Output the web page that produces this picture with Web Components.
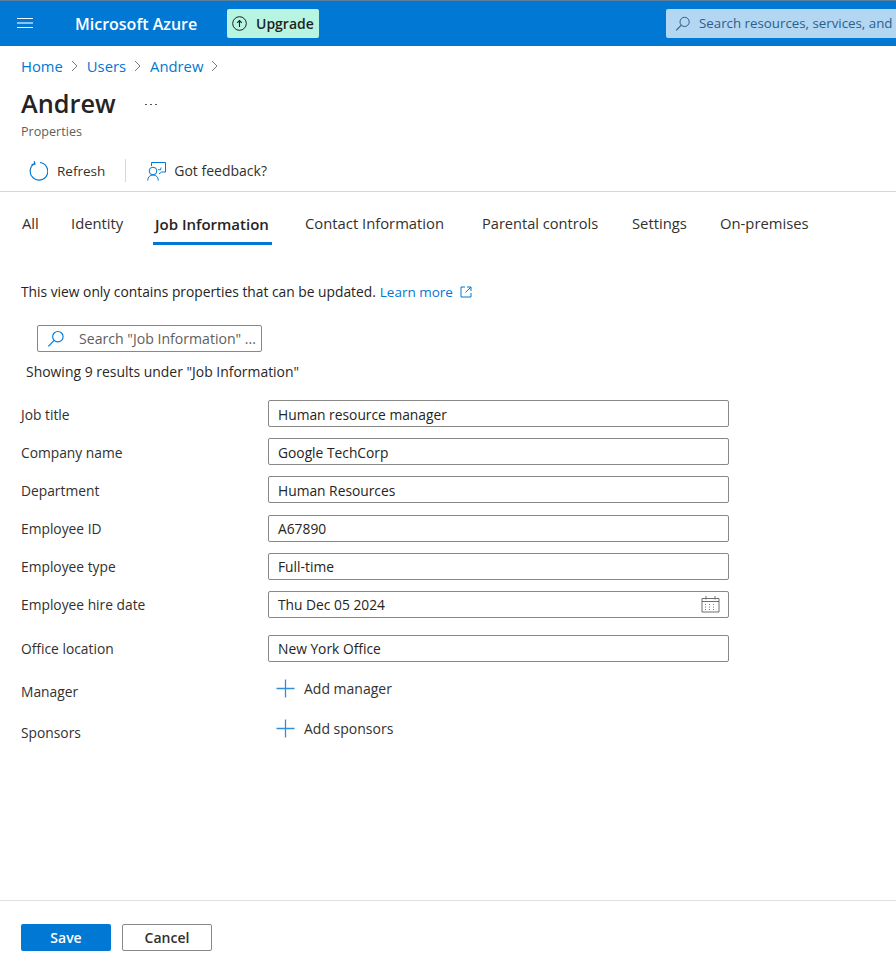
<!DOCTYPE html>
<html lang="en"><head><meta charset="utf-8"><title>Andrew - Properties</title>
<style>
html,body{margin:0;padding:0;height:100%;background:#fff}
body{font-family:"Open Sans","Noto Sans","Liberation Sans",sans-serif;font-size:14px;color:#292827;overflow:hidden}
</style></head><body>
<az-page>
  <az-header></az-header>
  <az-crumbs></az-crumbs>
  <az-title name="Andrew" sub="Properties"></az-title>
  <az-toolbar></az-toolbar>
  <az-tabs></az-tabs>
  <az-form></az-form>
  <az-footer slot="footer"></az-footer>
</az-page>
<script>
const SEARCH='<circle cx="9.6" cy="5.9" r="4.6" fill="none" stroke="currentColor" stroke-width="1"/><path d="M6.3 9.2 1.2 14.4" fill="none" stroke="currentColor" stroke-width="1.1"/>';
const CHEV='<svg width="7" height="12" viewBox="0 0 7 12" fill="none" stroke="#7a7a7a"><path d="M1 1l5 5-5 5"/></svg>';
function def(name,html){
  customElements.define(name,class extends HTMLElement{
    constructor(){super();const r=this.attachShadow({mode:'open'});r.innerHTML=typeof html==='function'?html(this):html;}
    connectedCallback(){if(typeof html==='function')this.shadowRoot.innerHTML=html(this);}
  });
}
def('az-page',`<style>:host{display:flex;flex-direction:column;height:968px;overflow:hidden;box-sizing:border-box}
 .foot{margin-top:auto}</style><slot></slot><div class="foot"><slot name="footer"></slot></div>`);

def('az-header',`<style>
:host{display:flex;align-items:center;height:46px;box-sizing:border-box;background:#0078d4;border-top:1px solid #5d7f99;padding-left:17px;overflow:hidden;flex:none}
.burger{flex:none;display:block;margin-top:-1px}
.brand{margin-left:42px;color:#fff;font-size:16px;font-weight:600;white-space:nowrap;flex:none;width:152px}
.up{display:flex;align-items:center;gap:9px;width:92px;height:29px;box-sizing:border-box;padding-left:5px;background:#b7f5e2;border-radius:2px;color:#1f1f1f;font-weight:600;font-size:14px;flex:none;margin-top:-1px}
.up svg{flex:none}
.search{margin-left:347px;display:flex;align-items:center;gap:9px;height:29px;width:230px;flex:none;background:#b3d6f2;border-radius:2px 0 0 2px;padding-left:9px;box-sizing:border-box;color:#2c5f8a;font-size:13.3px;white-space:nowrap;margin-top:-1px}
.search svg{flex:none}
.search span{margin-top:-1px}
</style>
<svg class="burger" width="16" height="10" viewBox="0 0 16 10"><path d="M0 .5h16M0 9.500h16" stroke="#f2f8fd"/><path d="M0 5h16" stroke="#8cc4ee" stroke-width="2"/></svg>
<div class="brand">Microsoft Azure</div>
<div class="up"><svg width="15" height="15" viewBox="0 0 15 15" fill="none" stroke="#1f1f1f"><circle cx="7.5" cy="7.5" r="6.8"/><path d="M7.5 11V4.6M5.2 6.8l2.3-2.3 2.3 2.3" stroke-width="1.1"/></svg>Upgrade</div>
<div class="search"><svg width="15" height="15" viewBox="0 0 15 15">${SEARCH}</svg><span>Search resources, services, and</span></div>`);

def('az-crumbs',`<style>
:host{display:flex;align-items:center;height:40px;padding-left:21px;color:#0078d4;font-size:14.8px;flex:none}
svg{margin:0 9px 0 8px;flex:none}
</style><span>Home</span>${CHEV}<span>Users</span>${CHEV}<span>Andrew</span>${CHEV}`);

def('az-title',el=>`<style>
:host{display:block;padding-left:21px;flex:none;height:60px}
.t{display:flex;align-items:center;height:34px;font-size:25.3px;font-weight:600;color:#252423}
.dots{margin-left:29px;display:flex;gap:3px;margin-top:2px}
.dots i{width:2px;height:1px;background:#555}
.s{font-size:12.6px;color:#605e5c;line-height:16px;padding-top:4px}
</style><div class="t"><span>${el.getAttribute('name')||''}</span><span class="dots"><i></i><i></i><i></i></span></div><div class="s">${el.getAttribute('sub')||''}</div>`);

def('az-toolbar',`<style>
:host{display:flex;align-items:center;box-sizing:border-box;height:51px;padding:18px 0 9px 29px;margin-top:-5px;border-bottom:1px solid #d8d8d8;flex:none;font-size:14px;color:#323130}
.b{display:flex;align-items:center;white-space:nowrap}
.sep{width:1px;height:23px;background:#d8d8d8;margin:0 21px 0 20px}
.r{font-size:13.5px}
</style>
<div class="b r"><svg width="19" height="20" viewBox="0 0 19 20" fill="none" stroke="#0078d4" stroke-width="1.2" style="margin-right:9px;flex:none"><path d="M5.6 2.6A8.8 8.8 0 1 0 11 1.5"/><path d="M5.2 .2 6 3 2.6 3.6"/></svg>Refresh</div>
<div class="sep"></div>
<div class="b"><svg width="19" height="20" viewBox="0 0 19 20" fill="none" stroke="#0078d4" style="margin-right:8px;flex:none"><path d="M4.5 5V1.5h14v9.500h-4l-2.500 2"/><path d="M11 8.500l2.500.5.5-2.500" stroke-width=".9"/><circle cx="6" cy="10" r="3.800"/><path d="M.7 19.500c.2-3.500 2.200-5.500 5.300-5.500s5.100 2 5.300 5.500"/></svg>Got feedback?</div>`);

def('az-tabs',`<style>
:host{display:block;height:53px;flex:none;font-size:14.8px;color:#323130;white-space:nowrap}
.w{display:grid;grid-template-columns:22px 49px 84px 150px 177px 150px 88px auto;height:53px;position:relative}
span{display:block;padding-top:20px;line-height:22px}
.a{font-weight:600;color:#252423;font-size:15px;padding-top:21px}
.p{font-size:14.6px}
.u{position:absolute;left:153px;width:119px;top:50px;height:3px;background:#0078d4}
</style><div class="w"><i></i>
<span>All</span><span>Identity</span><span class="a">Job Information</span><span>Contact Information</span><span class="p">Parental controls</span><span>Settings</span><span>On-premises</span>
<div class="u"></div></div>`);

def('az-field',el=>{
 const v=el.getAttribute('value')||'',cal=el.hasAttribute('calendar');
 return `<style>
:host{display:grid;grid-template-columns:247px 461px;align-items:center;padding-left:21px;height:27px;flex:none;font-size:13.8px}
.box{height:27px;box-sizing:border-box;border:1px solid #8a8886;border-radius:2px;padding:0 9px;display:flex;align-items:center;justify-content:space-between;color:#252423;white-space:nowrap}
.txt{padding-top:1px}
svg{flex:none;margin-right:-1px}
</style><div class="txt">${el.getAttribute('label')}</div><div class="box"><span class="txt">${v}</span>${cal?`<svg width="19" height="18" viewBox="0 0 19 18" fill="none" stroke="#6e6e6e"><path d="M1 3.500h17v13.500H1zM1 6.500h17"/><path d="M5 1v3.500M14 1v3.500"/><path d="M4 9.500h2M8 9.500h2M12 9.500h2M4 12h2M8 12h2M12 12h2M4 14.500h2M8 14.500h2M12 14.500h2" stroke-dasharray="1 1" stroke="#8a7a6a"/></svg>`:''}</div>`;
});

def('az-add',el=>`<style>
:host{display:grid;grid-template-columns:255px auto;padding-left:21px;flex:none;height:20px;font-size:14px}
.l{margin-top:3px;font-size:13.8px}
.r{display:flex;align-items:center;gap:9px;margin-top:var(--shift,0);height:20px;white-space:nowrap;color:#323130}
svg{flex:none}
</style><div class="l">${el.getAttribute('label')}</div><div class="r"><svg width="19" height="19" viewBox="0 0 19 19" stroke="#2f8fdc" stroke-width="1.3"><path d="M9.500 .5v18M.5 9.500h18"/></svg>${el.getAttribute('action')}</div>`);

def('az-form',`<style>
:host{display:flex;flex-direction:column;flex:none;font-size:13.8px;color:#323130}
.info{margin:36px 0 0 21px;line-height:22px;color:#252423;white-space:nowrap;display:flex;align-items:center}
.info a{color:#0078d4;margin-left:4px;display:flex;align-items:center;gap:7px;text-decoration:none;font-size:13.5px}
.srch{margin:22px 0 0 37px;width:225px;height:27px;box-sizing:border-box;border:1px solid #8a8886;border-radius:2px;display:flex;align-items:center;padding-left:9px;gap:15px;color:#605e5c;white-space:nowrap;overflow:hidden;font-size:14.1px}
.srch svg{color:#0078d4;flex:none}
.res{margin:9px 0 17px 26px;line-height:22px;color:#292827;font-size:13.95px}
.fields{display:flex;flex-direction:column}
.fields az-field{margin-bottom:11.2px}
</style>
<div class="info">This view only contains properties that can be updated.<a href="#">Learn more <svg width="12" height="12" viewBox="0 0 12 12" fill="none" stroke="#0078d4"><path d="M5 1H1v10h10V7M7 1h4v4M11 1 5.500 6.500"/></svg></a></div>
<div class="srch"><svg width="17" height="17" viewBox="0 0 15 15">${SEARCH}</svg><span>Search "Job Information" ...</span></div>
<div class="res">Showing 9 results under "Job Information"</div>
<div class="fields">
<az-field label="Job title" value="Human resource manager"></az-field>
<az-field label="Company name" value="Google TechCorp"></az-field>
<az-field label="Department" value="Human Resources"></az-field>
<az-field label="Employee ID" value="A67890"></az-field>
<az-field label="Employee type" value="Full-time"></az-field>
<az-field label="Employee hire date" value="Thu Dec 05 2024" calendar style="margin-bottom:17px"></az-field>
<az-field label="Office location" value="New York Office" style="margin-bottom:17px"></az-field>
<az-add label="Manager" action="Add manager" style="margin-bottom:21px"></az-add>
<az-add label="Sponsors" action="Add sponsors" style="--shift:-1px"></az-add>
</div>`);

def('az-footer',`<style>
:host{display:flex;gap:11px;height:68px;box-sizing:border-box;border-top:1px solid #e1e1e1;padding:23px 0 0 21px;font-size:14px;font-weight:600}
div{width:90px;height:27px;box-sizing:border-box;border-radius:2px;display:flex;align-items:center;justify-content:center}
.p{background:#0078d4;color:#fff}
.s{border:1px solid #8a8886;color:#323130}
</style><div class="p">Save</div><div class="s">Cancel</div>`);
</script>
</body></html>
